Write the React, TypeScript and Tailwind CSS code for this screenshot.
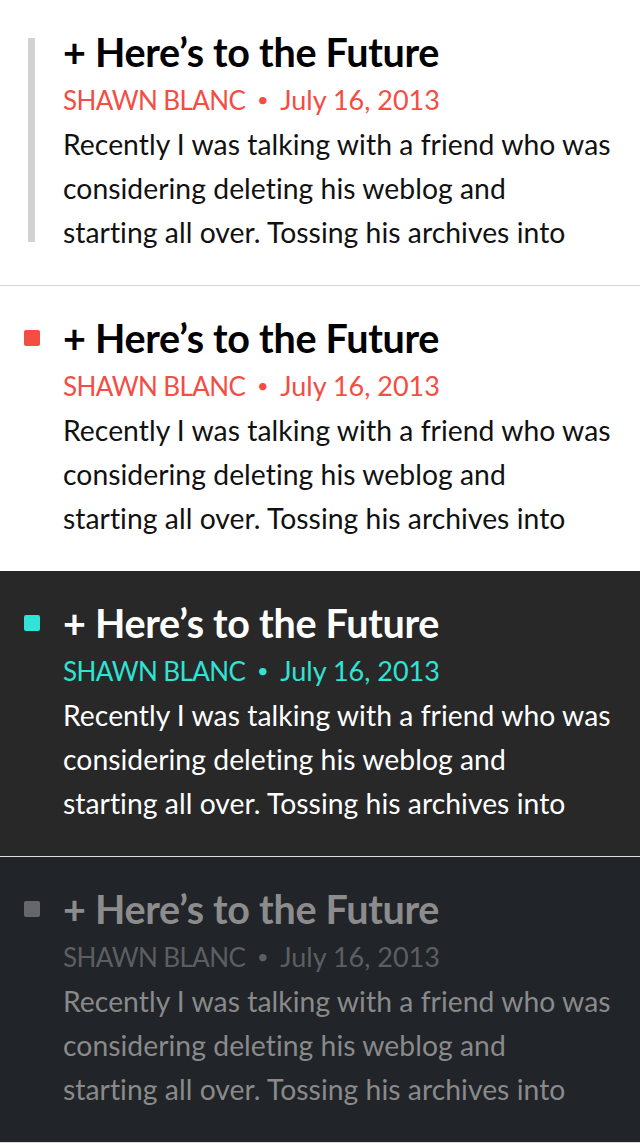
import React from "react";

type Theme = {
  bg: string;
  border: string;
  title: string;
  meta: string;
  body: string;
  marker: "bar" | "square";
  markerColor: string;
  height: string;
};

const themes: Theme[] = [
  { bg: "bg-white", border: "border-b border-[#d4d4d4]", title: "text-black", meta: "text-[#f44d44]", body: "text-[#111111]", marker: "bar", markerColor: "bg-[#d2d2d2]", height: "h-[286px]" },
  { bg: "bg-white", border: "", title: "text-black", meta: "text-[#f44d44]", body: "text-[#111111]", marker: "square", markerColor: "bg-[#f44d44]", height: "h-[285px]" },
  { bg: "bg-[#282828]", border: "border-b border-[#e0e0e0]", title: "text-white", meta: "text-[#2fe3d6]", body: "text-white", marker: "square", markerColor: "bg-[#2fe3d6]", height: "h-[286px]" },
  { bg: "bg-[#212428]", border: "border-b border-[#d8d8d8]", title: "text-[#8c8c8c]", meta: "text-[#5c5f62]", body: "text-[#8a8a8a]", marker: "square", markerColor: "bg-[#66676b]", height: "h-[286px]" },
];

function Entry({ t }: { t: Theme }) {
  return (
    <section className={`flex ${t.bg} ${t.border} ${t.height} box-border`}>
      <div className="w-[63px] shrink-0 pt-[38px]">
        {t.marker === "bar" ? (
          <div className={`ml-[28px] w-[7px] h-[204px] rounded-[1px] ${t.markerColor}`} />
        ) : (
          <div className={`ml-[24px] mt-[6px] w-[16px] h-[16px] rounded-[2px] ${t.markerColor}`} />
        )}
      </div>
      <div className="pt-[29px] [font-variant-ligatures:none]">
        <h2 className={`text-[39.5px] leading-[46px] font-bold tracking-[-0.3px] ${t.title}`}>+ Here’s to the Future</h2>
        <div className={`flex items-center h-[46px] mt-[2px] ${t.meta}`}>
          <span className="text-[26px] tracking-[-0.6px]">SHAWN BLANC</span>
          <span className="w-[35px] text-center text-[20px] relative top-[-1px]">•</span>
          <span className="text-[27px]">July 16, 2013</span>
        </div>
        <p className={`text-[28.3px] leading-[44px] tracking-[0.04px] mt-[-1px] ${t.body}`}>
          Recently I was talking with a friend who was
          <br />
          considering deleting his weblog and
          <br />
          starting all over. Tossing his archives into
        </p>
      </div>
    </section>
  );
}

export default function App() {
  return (
    <div className="w-[640px] h-[1143px] overflow-hidden bg-white" style={{ fontFamily: '"Lato", "Open Sans", sans-serif' }}>
      {themes.map((t, i) => (
        <Entry key={i} t={t} />
      ))}
    </div>
  );
}
